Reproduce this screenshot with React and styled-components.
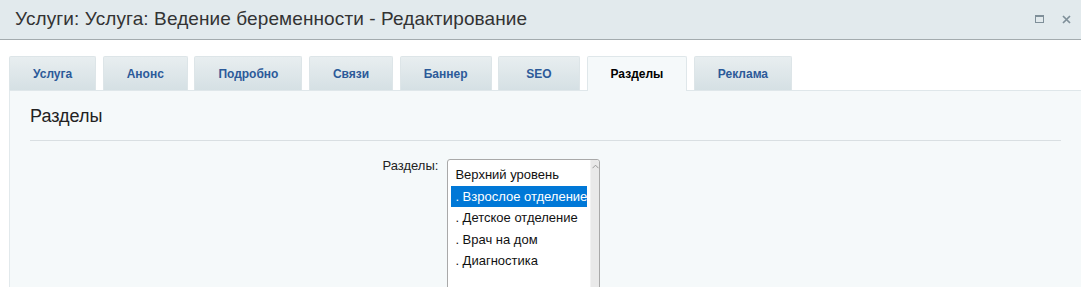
import React from "react";
import styled, { createGlobalStyle } from "styled-components";

const Global = createGlobalStyle`
  html, body { margin: 0; padding: 0; background: #fff; }
  body { width: 1081px; height: 287px; overflow: hidden; font-family: "Liberation Sans", Arial, sans-serif; }
`;

const Window = styled.div`
  display: flex;
  flex-direction: column;
  width: 1081px;
  height: 287px;
  overflow: hidden;
`;

const TitleBar = styled.div`
  height: 40px;
  box-sizing: border-box;
  display: flex;
  align-items: center;
  justify-content: space-between;
  padding: 0 10px 1px 15px;
  background: #e2eaed;
  border-bottom: 1px solid #a3abae;
  flex-shrink: 0;
`;

const Title = styled.h1`
  margin: 0;
  font-size: 19px;
  font-weight: normal;
  color: #333;
  letter-spacing: 0.1px;
`;

const TitleButtons = styled.div`
  display: flex;
  align-items: center;
  gap: 17px;
`;

const IconButton = styled.span`
  display: flex;
  width: 10px;
  height: 10px;
  align-items: center;
  justify-content: center;
`;

const TabsRow = styled.div`
  display: flex;
  gap: 6.5px;
  margin: 16px 0 0 9px;
  flex-shrink: 0;
`;

const Tab = styled.div`
  box-sizing: border-box;
  min-width: 82px;
  padding: 0 23px;
  display: flex;
  align-items: center;
  justify-content: center;
  font-size: 12px;
  font-weight: bold;
  color: ${(p) => (p.$active ? "#000" : "#2c5a99")};
  background: ${(p) =>
    p.$active ? "#f5f9fa" : "linear-gradient(#e8eef0, #d5e0e4)"};
  border: 1px solid ${(p) => (p.$active ? "#dfe7ea" : "#dde5e8")};
  border-bottom: none;
  border-radius: 2px 2px 0 0;
  position: relative;
  margin-bottom: ${(p) => (p.$active ? "-1px" : "0")};
  height: ${(p) => (p.$active ? "35px" : "34px")};
  z-index: ${(p) => (p.$active ? 1 : 0)};
`;

const Panel = styled.div`
  flex: 1;
  margin-left: 9px;
  background: #f5f9fa;
  border-top: 1px solid #dfe7ea;
  border-left: 1px solid #e2e9ec;
  padding: 0 20px 0 20px;
`;

const SectionTitle = styled.h2`
  margin: 0;
  height: 50px;
  display: flex;
  align-items: center;
  font-size: 18px;
  font-weight: normal;
  color: #222;
  border-bottom: 1px solid #d9dfe2;
  padding-top: 1px;
  box-sizing: border-box;
`;

const FormRow = styled.div`
  display: grid;
  grid-template-columns: 40% 60%;
  margin-top: 18px;
`;

const Label = styled.label`
  text-align: right;
  font-size: 13px;
  color: #222;
  padding: 0 4px 0 0;
  line-height: 14px;
`;

const ListBox = styled.div`
  width: 153px;
  height: 150px;
  margin-left: 5px;
  box-sizing: border-box;
  border: 1px solid #a9a9a9;
  border-radius: 3px;
  background: #fff;
  display: flex;
`;

const Options = styled.div`
  flex: 1;
  padding: 4px 3px 0 3px;
  display: flex;
  flex-direction: column;
`;

const Option = styled.div`
  height: 21.5px;
  display: flex;
  align-items: center;
  padding-left: 4px;
  font-size: 13px;
  white-space: nowrap;
  color: ${(p) => (p.$selected ? "#fff" : "#111")};
  background: ${(p) => (p.$selected ? "#0078d7" : "transparent")};
`;

const ScrollTrack = styled.div`
  width: 11px;
  background: #e9e9e9;
  border-left: 1px solid #f2f2f2;
  border-radius: 0 3px 3px 0;
  display: flex;
  justify-content: center;
  padding-top: 4px;
  box-sizing: border-box;
`;

const tabs = ["Услуга", "Анонс", "Подробно", "Связи", "Баннер", "SEO", "Разделы", "Реклама"];
const options = ["Верхний уровень", ". Взрослое отделение", ". Детское отделение", ". Врач на дом", ". Диагностика"];

export default function App() {
  return (
    <>
      <Global />
      <Window>
        <TitleBar>
          <Title>Услуги: Услуга: Ведение беременности - Редактирование</Title>
          <TitleButtons>
            <IconButton>
              <svg width="9" height="8" viewBox="0 0 9 8">
                <rect x="0.5" y="0.5" width="8" height="7" fill="none" stroke="#7f8f99" />
                <rect x="0" y="0" width="9" height="2" fill="#7f8f99" />
              </svg>
            </IconButton>
            <IconButton>
              <svg width="9" height="9" viewBox="0 0 9 9">
                <path d="M1 1L8 8M8 1L1 8" stroke="#7f8f99" strokeWidth="1.7" />
              </svg>
            </IconButton>
          </TitleButtons>
        </TitleBar>
        <TabsRow>
          {tabs.map((t) => (
            <Tab key={t} $active={t === "Разделы"}>
              {t}
            </Tab>
          ))}
        </TabsRow>
        <Panel>
          <SectionTitle>Разделы</SectionTitle>
          <FormRow>
            <Label>Разделы:</Label>
            <div>
              <ListBox>
                <Options>
                  {options.map((o, i) => (
                    <Option key={o} $selected={i === 1}>
                      {o}
                    </Option>
                  ))}
                </Options>
                <ScrollTrack>
                  <svg width="7" height="5" viewBox="0 0 7 5">
                    <path d="M0.5 4.2L3.5 1.2L6.5 4.2" fill="none" stroke="#9a9a9a" strokeWidth="1" />
                  </svg>
                </ScrollTrack>
              </ListBox>
            </div>
          </FormRow>
        </Panel>
      </Window>
    </>
  );
}
